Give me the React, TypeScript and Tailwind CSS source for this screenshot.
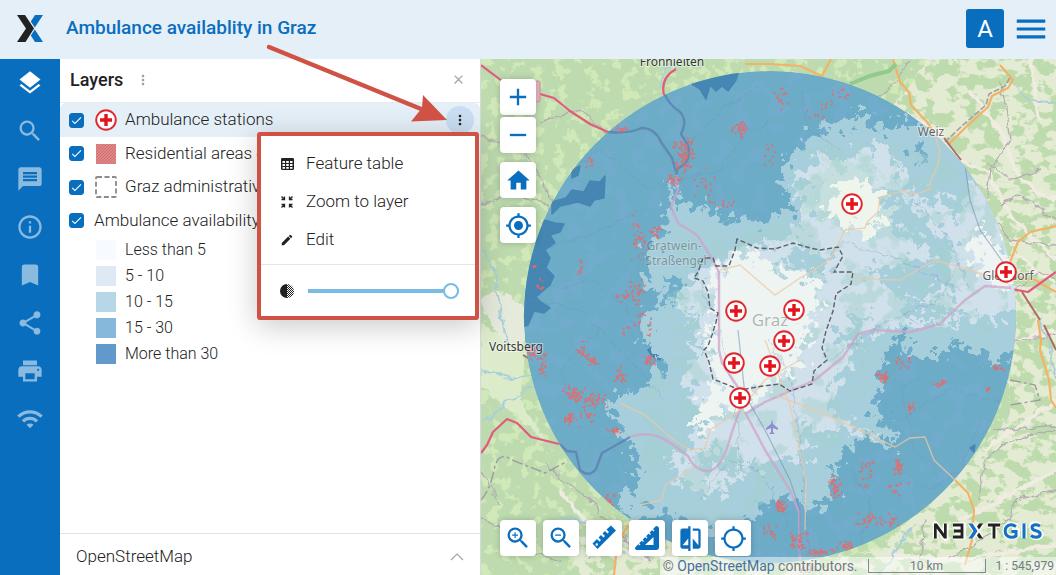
import React from "react";
import {
  MdLayers, MdSearch, MdMessage, MdInfoOutline, MdBookmark, MdShare, MdPrint, MdWifi, MdHome,
  MdMyLocation, MdCompare, MdZoomIn, MdZoomOut, MdEdit, MdMoreVert, MdAdd, MdRemove, MdMenu,
  MdLocationSearching, MdClose, MdCheck,
} from "react-icons/md";

type Point = [number, number];

function StationGlyph() {
  return (
    <g>
      <circle r="9.8" fill="#fff" stroke="#e3262e" strokeWidth="1.9" />
      <path d="M-6 0H6M0-6V6" stroke="#e3141c" strokeWidth="3.4" />
    </g>
  );
}

const stations: Point[] = [
  [852, 204], [1006, 272], [736, 311], [794, 310], [784, 341], [734, 363], [770, 366], [740, 398],
];

/* x, y, horizontal spread, vertical spread, count */
const settlements: [number, number, number, number, number][] = [
  [684, 155, 12, 17, 75], [740, 130, 10, 10, 34], [674, 180, 10, 6, 18], [622, 130, 7, 3, 12],
  [592, 162, 5, 6, 8], [640, 240, 10, 26, 30], [655, 230, 6, 12, 14], [580, 270, 4, 10, 10],
  [637, 290, 12, 14, 16], [628, 297, 20, 8, 22], [534, 268, 3, 4, 6], [541, 286, 4, 12, 10],
  [532, 352, 7, 8, 24], [543, 366, 5, 14, 20], [582, 350, 8, 10, 18], [593, 360, 8, 6, 14],
  [575, 395, 12, 10, 45], [595, 400, 12, 8, 26], [570, 420, 8, 8, 28], [615, 431, 7, 6, 16],
  [587, 417, 10, 12, 18], [650, 360, 8, 8, 20], [620, 375, 10, 9, 18], [640, 325, 20, 20, 18],
  [607, 502, 10, 9, 22], [723, 205, 15, 8, 10], [703, 185, 14, 24, 14], [780, 98, 9, 14, 16],
  [818, 110, 16, 12, 12], [840, 92, 18, 10, 10], [770, 155, 12, 20, 10], [882, 378, 6, 9, 26],
  [905, 365, 10, 8, 12], [940, 384, 8, 5, 14], [998, 367, 7, 5, 12], [988, 389, 3, 3, 8],
  [912, 408, 5, 9, 14], [898, 466, 4, 10, 25], [900, 490, 12, 12, 12], [835, 490, 7, 18, 34],
  [865, 472, 12, 18, 20], [780, 507, 8, 8, 30], [770, 530, 14, 10, 14], [798, 540, 12, 12, 34],
  [820, 552, 15, 5, 26], [845, 546, 10, 5, 20], [870, 520, 14, 12, 26], [890, 520, 10, 8, 12],
];

function scatter() {
  let seed = 41;
  const next = () => {
    seed = (seed * 16807) % 2147483647;
    return seed / 2147483647;
  };
  let d = "";
  for (const [x, y, rx, ry, n] of settlements) {
    for (let i = 0; i < n; i++) {
      const px = x + (next() + next() - 1) * rx;
      const py = y + (next() + next() - 1) * ry;
      const dx = (next() - 0.5) * 4;
      const dy = (next() - 0.5) * 4;
      d += `M${px.toFixed(1)} ${py.toFixed(1)}l${dx.toFixed(1)} ${dy.toFixed(1)}`;
    }
  }
  return d;
}

const settlementPath = scatter();

function MapCanvas() {
  return (
    <svg
      className="absolute inset-0 h-full w-full"
      viewBox="481 59 575 516"
      preserveAspectRatio="xMinYMin slice"
      role="img"
      aria-label="Map of ambulance availability"
    >
      <defs>
        <clipPath id="area"><circle cx="770" cy="317" r="246" /></clipPath>
        <filter id="jag" x="-10%" y="-10%" width="120%" height="120%" colorInterpolationFilters="sRGB">
          <feTurbulence type="fractalNoise" baseFrequency="0.1" numOctaves="4" seed="8" />
          <feDisplacementMap in="SourceGraphic" scale="44" xChannelSelector="R" yChannelSelector="G" />
        </filter>
        <filter id="rough" x="-10%" y="-10%" width="120%" height="120%" colorInterpolationFilters="sRGB">
          <feTurbulence type="fractalNoise" baseFrequency="0.09" numOctaves="3" seed="3" />
          <feDisplacementMap in="SourceGraphic" scale="9" xChannelSelector="R" yChannelSelector="G" />
        </filter>
        <filter id="meadow" x="0" y="0" width="100%" height="100%" colorInterpolationFilters="sRGB">
          <feTurbulence type="fractalNoise" baseFrequency="0.09" numOctaves="4" seed="12" />
          <feColorMatrix values="0 0 0 0 0.82  0 0 0 0 0.915  0 0 0 0 0.72  12 0 0 0 -6.6" />
          <feComposite in2="SourceGraphic" operator="in" />
        </filter>
        <filter id="woods" x="0" y="0" width="100%" height="100%" colorInterpolationFilters="sRGB">
          <feTurbulence type="fractalNoise" baseFrequency="0.06 0.08" numOctaves="4" seed="5" />
          <feColorMatrix values="0 0 0 0 0.74  0 0 0 0 0.86  0 0 0 0 0.68  0 14 0 0 -6.8" />
          <feComposite in2="SourceGraphic" operator="in" />
        </filter>
        <filter id="relief" x="0" y="0" width="100%" height="100%" colorInterpolationFilters="sRGB">
          <feTurbulence type="fractalNoise" baseFrequency="0.06" numOctaves="4" seed="21" />
          <feColorMatrix values="0 0 0 0 0.48  0 0 0 0 0.68  0 0 0 0 0.86  9 0 0 0 -4.7" />
          <feComposite in2="SourceGraphic" operator="in" />
        </filter>
        <filter id="foliage" x="0" y="0" width="100%" height="100%" colorInterpolationFilters="sRGB">
          <feTurbulence type="fractalNoise" baseFrequency="0.045" numOctaves="5" seed="33" />
          <feColorMatrix values="0 0 0 0 0.64  0 0 0 0 0.82  0 0 0 0 0.8  12 0 0 0 -6.1" />
          <feComposite in2="SourceGraphic" operator="in" />
        </filter>
      </defs>

      <rect x="481" y="59" width="575" height="516" fill="#bddbaf" />
      <rect x="481" y="59" width="575" height="516" filter="url(#meadow)" />
      <g filter="url(#rough)">
        <path d="M880 120L930 59H1066V590H590L560 535L640 525L760 570L880 550L1010 420L1010 240Z" fill="#e4ebd3" />
        <path d="M481 325L500 335L525 355L520 400L545 440L520 420L481 385Z" fill="#dceccb" />
        <path d="M481 300L500 290L525 310L524 350L500 340Z" fill="#e6eadb" />
      </g>
      <path d="M880 120L930 59H1056V575H590L570 525L640 525L760 570L880 550L1010 420L1010 240Z" filter="url(#woods)" />
      <g fill="none" stroke="#f0ece2" strokeWidth="4" filter="url(#rough)">
        <path d="M905 115L935 130L960 160L990 175L1010 215L1056 260M970 90L1000 130L1020 180L1056 200M1010 250L1056 285M1015 340L1056 330M985 450L1056 400M960 520L1056 470M890 555L960 560L1056 545M560 490L600 540L650 560M1030 59L1040 120" />
      </g>

      <g fill="none" stroke="#b3adb1" strokeWidth="1.4" filter="url(#rough)">
        <path d="M481 137L503 143L525 128M540 122L580 110L610 135M525 152L540 180L552 200L548 250L520 230M481 203L510 195L548 203L550 215M910 59L895 85L870 100M1000 80L1010 140L990 170L985 210L1010 240L1056 245M985 160L1010 180L1040 170M1000 205L1020 195L1056 220M1015 290L1040 270L1056 280M1010 340L1056 335M990 430L1025 428L1056 425M980 500L985 460L1010 440L1056 430M950 560L1010 520L1015 500L1056 490M481 520L500 525L525 550L560 560M545 462L560 478L590 500L605 520L650 560M481 470L500 505M590 560L600 530L640 545M920 560L925 520" />
      </g>
      <path d="M481 500Q490 490 494 470T512 460L545 473L566 462M1010 380L1035 385L1040 400L1010 405" fill="none" stroke="#9f98a0" strokeWidth="1.4" strokeDasharray="11 3 3 3" />
      <g fill="none" stroke="#aacfdb" strokeWidth="2" filter="url(#rough)">
        <path d="M481 250L495 270L500 310L508 345M481 370L510 378L530 375M481 425L510 400L535 385M560 515L595 525M660 90L664 70L680 59M910 530L890 560L880 575M1018 90L1030 100L1056 103M1040 320L1050 350L1056 380" />
      </g>

      <g fill="none" stroke="#f3b365" strokeWidth="2.2" strokeLinejoin="round">
        <path d="M745 64H770L800 66L822 76L831 59M893 59L900 82L909 92L911 105L927 122L934 133M1000 65L1013 80L1008 88L992 96L988 107L965 128L948 145M1010 262L1018 242L1030 232L1056 226M1012 276L1035 280L1056 292M1038 320L1041 340L1040 350L1049 380L1051 400L1056 408M955 480L968 493L974 510L972 540L965 565M628 525L617 545L614 575" />
      </g>
      <path d="M948 145L966 128L989 108L992 97L1008 89L1014 79" fill="none" stroke="#a59ea0" strokeWidth="1.6" strokeDasharray="6 2" transform="translate(-3 -3)" />
      <g fill="none" stroke="#e35b7c" strokeWidth="2.2" strokeLinejoin="round">
        <path d="M481 65L502 81M540 94L554 98L570 111L590 124L610 133M664 95Q660 78 676 69M481 453L487 445L493 432L507 419L517 423L531 437L559 444M1011 289L1028 292L1056 272" />
      </g>
      <rect x="534" y="81" width="6" height="21" rx="2" fill="#e6b4c0" stroke="#cf8fa1" />
      <path d="M523 355L535 362M944 138L961 160M1022 292L1040 320M1044 325L1056 350" fill="none" stroke="#ae6d62" strokeWidth="2" />
      <path d="M850 84L870 76L889 71L896 64" fill="none" stroke="#92c98c" strokeWidth="4" />

      <g clipPath="url(#area)">
        <circle cx="770" cy="317" r="246" fill="#6dacc6" />
        <circle cx="770" cy="317" r="246" filter="url(#relief)" opacity="0.3" />
        <g fill="#4586b2" stroke="#4586b2" strokeWidth="1.5" strokeLinejoin="round">
          <path d="M695 60H742L736 80L728 91L722 86L716 91L710 85L706 99L700 89L692 84Z" />
          <path d="M552 202L566 198L572 190L584 192L590 181L600 182L605 176L604 198L594 200L590 206L578 202L560 206L552 214Z" />
          <path d="M572 170L580 166L578 175L572 178Z" />
          <path d="M515 215L548 221L555 223L564 224L560 232L550 235L555 243L545 250L550 258L546 268L554 276L550 285L544 290L536 297L542 303L550 308L544 313L534 311L528 325L515 330Z" />
          <path d="M655 345L664 350L660 360L652 356L648 350ZM970 448L975 445L974 452Z" />
        </g>
        <g filter="url(#jag)">
          <path
            fill="#a7cedb"
            d="M862 106L868 124L893 128L930 120L1040 120L1040 358L990 360L975 353L953 342L942 357L915 357L900 332L888 350L880 372L878 395L872 417L886 422L897 447L884 443L870 438L855 442L843 455L832 478L828 502L812 512L798 502L775 498L758 508L740 528L710 532L690 522L670 515L655 510L636 520L622 510L618 498L628 488L641 480L636 462L628 440L618 424L606 404L622 392L648 385L664 368L658 352L642 338L644 318L658 306L650 286L646 262L652 242L665 236L668 206L666 184L674 188L686 212L706 206L726 222L748 220L758 230L772 218L790 210L790 195L783 177L790 160L803 138L828 128L846 124Z"
          />
          <path
            fill="#d0e1eb"
            d="M801 168L822 156L836 164L860 151L883 145L902 168L904 183L924 204L942 198L960 214L974 178L1040 210L1030 312L982 318L940 325L895 325L865 335L848 360L832 388L830 412L855 424L875 434L838 432L815 430L808 458L780 460L742 474L716 494L684 484L668 466L690 446L704 424L692 404L688 372L695 340L680 310L682 286L704 270L734 248L785 240L804 222L802 194Z"
          />
          <path fill="#a7cedb" d="M876 185L896 193L918 208L932 230L955 248L950 262L922 248L900 230ZM866 270L905 262L960 258L945 290L908 302L890 288ZM800 245L836 255L820 278L778 262ZM715 355L690 345L700 320L690 306L684 330ZM830 340L870 310L855 345ZM900 300L950 305L970 318L910 318Z" />
          <path fill="#a9d0d9" d="M700 450L735 450L750 470L700 475ZM802 425L818 430L812 455L800 450Z" />
          <path fill="#71aeca" d="M664 278L682 276L683 290L668 302ZM912 145L922 143L926 156L918 156Z" />
          <path fill="#c5dfdf" d="M820 168L850 160L880 170L866 184L895 210L875 232L830 228L804 208Z" />
        </g>
        <path
          filter="url(#foliage)"
          opacity="0.45"
          d="M862 140L930 150L1000 200L1010 330L960 335L900 325L870 370L860 420L870 435L820 450L800 490L720 520L640 505L640 400L670 350L665 250L700 240L790 220L800 150Z"
        />
        <g filter="url(#jag)">
          <path fill="#edf5ed" d="M834 188L852 182L872 184L880 204L884 220L868 236L842 222L826 210Z" />
          <path fill="#edf4f2" d="M714 268L748 250L774 270L820 278L816 312L802 348L792 372L762 388L750 410L716 412L702 434L695 412L718 386L708 350L712 310Z" />
          <path fill="#edf4f2" d="M980 228L998 244L1018 270L1012 290L990 284L978 264L966 250Z" />
        </g>

        <g fill="none" stroke="#6f8ebd" strokeWidth="0.8" opacity="0.4" filter="url(#rough)">
          <path d="M545 185L600 150L625 170L650 190L680 180L720 170L740 140L770 120M540 250L590 235L640 210M530 300L580 310L610 340L640 370L665 400M560 290L590 280L620 300L650 350M600 330L560 370L570 400M880 400L900 420L950 390L1000 400M900 470L930 490L960 470L980 420M850 470L870 500L860 550M680 160L720 110L760 85M800 90L810 130L840 150M770 340L790 380L800 440L805 500L810 550M700 280L720 330L735 400L740 470M840 240L900 260L960 290M910 195L950 240L970 290M830 360L890 320L940 300L960 260M700 500L730 460L760 470L790 530M940 480L915 450L900 390L930 370" />
        </g>
        <g fill="none" stroke="#5b7faf" strokeWidth="2.4" strokeLinejoin="round" opacity="0.75">
          <path d="M608 132Q630 134 641 128Q655 128 661 142L672 158L676 172M664 92Q667 103 680 112Q688 120 681 134L688 145Q692 163 678 168L676 175" />
          <path d="M559 444L567 451L576 452L580 470Q589 478 596 469L602 453L618 444L630 437" />
        </g>
        <g fill="none" stroke="#cfa3c8" strokeWidth="2.4" strokeLinejoin="round" opacity="0.75">
          <path d="M676 175L678 190L671 207L678 223L697 235L708 252L719 272V350L722 363L745 398Q736 418 728 445Q720 470 708 471Q695 471 688 456Q668 440 657 436Q643 432 630 437M745 414L765 402L815 380L843 357L858 334L873 330L910 332L940 324L965 300L985 286L1011 288M745 412L765 450L790 490L799 512L800 570" />
        </g>
        <g fill="none" stroke="#edc8a5" strokeWidth="1.4" opacity="0.75">
          <path d="M934 133L940 150L938 165L931 180L929 190L916 194L903 191L880 197L878 212L867 222L865 228L845 230L840 240L830 260L800 278L775 295L740 265L720 270M854 279L900 280L935 260L990 276L1010 280M620 403L645 415L670 437L690 450L705 448L710 430L740 410L765 380L800 360M775 395L820 412L860 430L895 447L910 438L925 437L934 460L955 480M640 505L662 500L665 485L690 470M765 340L790 405L806 480L805 530" />
        </g>
        <path d="M800 555V510L790 480L765 430L745 395L738 330M944 138L965 165L970 200L980 230L1005 265" stroke="#718bb5" strokeWidth="1.2" fill="none" opacity="0.55" />
      </g>

      <path clipPath="url(#area)" d={settlementPath} stroke="#f06461" strokeWidth="1.3" strokeLinecap="square" fill="none" opacity="0.85" />

      <path
        d="M737 239L735 250L729 266L716 266L713 258L703 258L698 272L694 278L703 281L708 292L710 308L718 313L716 322L712 335L708 346L704 350L709 362L713 379L728 385L740 390L763 386L779 384L790 391L812 384L814 371L827 360L822 348L826 331L833 311L836 294L851 284L853 272L834 272L843 256L838 247L820 250L810 248L793 243L775 249L757 248Z"
        fill="none"
        stroke="#5d6066"
        strokeWidth="1.4"
        strokeDasharray="5 2.5"
      />

      <g fontFamily="Noto Sans, sans-serif" fontSize="12" textAnchor="middle" fill="#343737" stroke="#fff" strokeOpacity="0.5" strokeWidth="2" paintOrder="stroke">
        <text x="672" y="66">Frohnleiten</text>
        <text x="931" y="136" fontSize="12" fillOpacity="0.75">Weiz</text>
        <text x="674" y="250" fillOpacity="0.42" strokeOpacity="0.15">Gratwein-</text>
        <text x="676" y="265" fillOpacity="0.42" strokeOpacity="0.15">Straßengel</text>
        <text x="516" y="351">Voitsberg</text>
        <text x="1008" y="280" fillOpacity="0.8">Gleisdorf</text>
        <text x="770" y="326" fontSize="17" fillOpacity="0.35" strokeOpacity="0.2">Graz</text>
        <text x="806" y="573" fontSize="10" fill="#a73258" fillOpacity="0.7">A9</text>
      </g>
      <path d="M772 419L773 424L778 428V430L773 428V432L775 434H769L771 432V428L766 430V428L771 424Z" fill="#8f8fcf" />

      {stations.map(([x, y]) => (
        <g key={`${x}-${y}`} transform={`translate(${x} ${y})`}><StationGlyph /></g>
      ))}
    </svg>
  );
}

function LogoMark() {
  return (
    <svg className="h-7 w-7" viewBox="0 0 28 28" aria-hidden="true">
      <path d="M1 0H9L18 13.500L9.500 27H1L10 13.500Z" fill="#222" />
      <path d="M19 0H27L18.800 12.500L14.800 6.500Z M18.800 14.500L27 27H19L14.800 20.500Z" fill="#0a6ebf" />
    </svg>
  );
}

function NextGisLogo() {
  return (
    <svg className="h-6 w-[116px]" viewBox="0 0 116 24" role="img" aria-label="NextGIS">
      <g fill="none" strokeLinejoin="miter">
        <g stroke="#fff" strokeWidth="6" opacity="0.85" strokeLinejoin="round">
          <path d="M4.500 19V5L14.500 19V5M22 6H32V18H22M24 12H32M40 5L50 19M50 5L40 19M57 6H69M63 6V19M86 8Q79 3 75.500 8Q73 12 75.500 16Q80 20 86 16V12H81M93 5V19M109 7Q101 3 101 8Q101 11 106 12Q112 14 109 17Q105 20 100 16" />
        </g>
        <g fill="#222">
          <path d="M3 19.500V4.500H5.800L13 14.500V4.500H15.700V19.500H13L5.700 9.500V19.500Z" />
        </g>
        <g stroke="#222" strokeWidth="2.800">
          <path d="M22 6H31V18H22M23 12H31M57 6H69M63 6V19.500" />
        </g>
        <g stroke="#1670c4" strokeWidth="3">
          <path d="M85 7.500Q82 5.500 80 5.700Q74.200 6.500 74.200 12T80 18.300Q83 18.500 85 17V12.500H80.500M93 4.500V19.500M109 7Q106 5.600 104.500 5.800Q101 6.200 101 8.500Q101 10.800 105 11.800Q109.500 12.800 109.200 15.500Q108.800 18.200 105 18.200Q102 18.200 100 16.500" />
        </g>
      </g>
      <path d="M48 4.500H52L44 16.500L41 19.500H37.500Z" fill="#1670c4" opacity="0" />
      <path d="M37.500 4.500H41.500L46.500 12L41.500 19.500H37.500L42.500 12Z" fill="#1670c4" />
      <path d="M48 4.500H52L48 10.500L46 7.500ZM48 13.500L52 19.500H48L46 16.500Z" fill="#222" />
    </svg>
  );
}

function RulerIcon() {
  return (
    <svg width="26" height="26" viewBox="0 0 26 26" aria-hidden="true">
      <path d="M1.500 18.500L6 14L8.500 16.500L10 15L7.500 12.500L10 10L12.500 12.500L14 11L11.500 8.500L14 6L16.500 8.500L18 7L15.500 4.500L20 0.500L25 5.500L6.500 24Z" fill="#0a6ebf" />
      <circle cx="5.800" cy="19.500" r="1.200" fill="#fff" />
    </svg>
  );
}

function TriangleRulerIcon() {
  return (
    <svg width="26" height="26" viewBox="0 0 26 26" aria-hidden="true">
      <path fillRule="evenodd" d="M22 1Q25 1 25 4V22Q25 25 22 25H3Q0 24.500 1.500 22ZM19.500 12L11 20H19.500Z" fill="#0a6ebf" />
      <path d="M4 18L6 20M7.500 14.500L9.500 16.500M11 11L13 13M14.500 7.500L16.500 9.500M18 4L20 6" stroke="#fff" strokeWidth="1.300" />
    </svg>
  );
}

function TableIcon() {
  return (
    <svg width="13" height="12" viewBox="0 0 13 12" aria-hidden="true">
      <rect width="13" height="12" rx="1.300" fill="#222" />
      <path d="M1.500 3H4V5H1.500ZM5.200 3H7.800V5H5.200ZM9 3H11.500V5H9ZM1.500 6H4V8H1.500ZM5.200 6H7.800V8H5.200ZM9 6H11.500V8H9ZM1.500 9H4V10.800H1.500ZM5.200 9H7.800V10.800H5.200ZM9 9H11.500V10.800H9Z" fill="#fff" />
    </svg>
  );
}

function ZoomToIcon() {
  return (
    <svg width="12" height="12" viewBox="0 0 12 12" fill="none" stroke="#222" strokeWidth="1.300" aria-hidden="true">
      <path d="M0.500 0.500L3 3M3.500 0.500V3.500H0.500M11.500 0.500L9 3M8.500 0.500V3.500H11.500M0.500 11.500L3 9M0.500 8.500H3.500V11.500M11.500 11.500L9 9M11.500 8.500H8.500V11.500" />
    </svg>
  );
}

function OpacityIcon() {
  return (
    <svg width="14" height="14" viewBox="0 0 14 14" aria-hidden="true">
      <defs>
        <pattern id="dots" width="2" height="2" patternUnits="userSpaceOnUse">
          <path d="M0 0H1V1H0ZM1 1H2V2H1Z" fill="#222" />
        </pattern>
      </defs>
      <path d="M7 0A7 7 0 0 0 7 14Z" fill="#222" />
      <path d="M7 0A7 7 0 0 1 7 14Z" fill="url(#dots)" />
    </svg>
  );
}

function ChevronUpIcon() {
  return (
    <svg width="14" height="14" viewBox="0 0 14 14" fill="none" stroke="#a3a6aa" strokeWidth="1.200" aria-hidden="true">
      <path d="M1 10L7 4L13 10" />
    </svg>
  );
}

function LayerCheckbox({ id }: { id: string }) {
  return (
    <span className="relative flex h-[15px] w-[15px] shrink-0">
      <input
        id={id}
        type="checkbox"
        defaultChecked
        className="peer h-[15px] w-[15px] appearance-none rounded-[3px] border border-[#0a6ebf] checked:bg-[#0a6ebf]"
      />
      <MdCheck className="pointer-events-none absolute inset-0 m-auto hidden text-white peer-checked:block" size={13} />
    </span>
  );
}

const navItems = [
  { label: "Layers", icon: MdLayers },
  { label: "Search", icon: MdSearch },
  { label: "Annotations", icon: MdMessage },
  { label: "Information", icon: MdInfoOutline },
  { label: "Bookmarks", icon: MdBookmark },
  { label: "Share", icon: MdShare },
  { label: "Print", icon: MdPrint },
  { label: "Tracking", icon: MdWifi },
];

const legend = [
  { text: "Less than 5", swatch: "bg-[#f7fbff]" },
  { text: "5 - 10", swatch: "bg-[#dfe9f6]" },
  { text: "10 - 15", swatch: "bg-[#b7d6e8]" },
  { text: "15 - 30", swatch: "bg-[#85b8da]" },
  { text: "More than 30", swatch: "bg-[#6199ca]" },
];

const menuItems = [
  { text: "Feature table", icon: <TableIcon /> },
  { text: "Zoom to layer", icon: <ZoomToIcon /> },
  { text: "Edit", icon: <MdEdit size={14} /> },
];

function LayerMenu() {
  return (
    <div className="absolute top-[73px] right-px z-10 w-[222px] rounded-[3px] border-4 border-[#d05244] bg-white shadow-[0_6px_30px_rgba(0,0,0,0.22)]">
      <ul className="pt-[9px] pb-[5px]">
        {menuItems.map((item) => (
          <li key={item.text}>
            <button type="button" className="flex h-[38px] w-full items-center gap-3 pl-[19px] text-left">
              <span className="flex w-[14px] justify-center">{item.icon}</span>
              {item.text}
            </button>
          </li>
        ))}
      </ul>
      <div className="flex h-[52px] items-center gap-3.5 border-t border-[#e5e5e5] pr-4 pl-[19px]">
        <OpacityIcon />
        <input
          type="range"
          aria-label="Layer opacity"
          defaultValue={100}
          className="h-4 min-w-0 flex-1 appearance-none bg-transparent [&::-webkit-slider-runnable-track]:h-1 [&::-webkit-slider-runnable-track]:bg-[#78bce6] [&::-webkit-slider-thumb]:-mt-1.5 [&::-webkit-slider-thumb]:h-4 [&::-webkit-slider-thumb]:w-4 [&::-webkit-slider-thumb]:appearance-none [&::-webkit-slider-thumb]:rounded-full [&::-webkit-slider-thumb]:border-2 [&::-webkit-slider-thumb]:border-[#78bce6] [&::-webkit-slider-thumb]:bg-white"
        />
      </div>
    </div>
  );
}

function LayersPanel() {
  return (
    <section className="relative flex w-[421px] shrink-0 flex-col border-r border-[#d5d9df] bg-white text-[17px] font-light">
      <div className="flex h-[44px] shrink-0 items-center border-b border-[#e8eaec] pr-3.5 pb-0.5 pl-2.5">
        <h2 className="text-[18px] font-medium">Layers</h2>
        <button type="button" aria-label="Panel options" className="ml-3 text-[#9c9fa3]"><MdMoreVert size={16} /></button>
        <button type="button" aria-label="Close panel" className="ml-auto text-[#a3a6aa]"><MdClose size={15} /></button>
      </div>
      <ul>
        <li className="flex h-[34px] items-center rounded-t-md bg-[#e5eff8] pr-1.5 pl-[9px]">
          <LayerCheckbox id="stations" />
          <label htmlFor="stations" className="ml-2.5 flex items-center gap-[7px]">
            <svg width="24" height="24" viewBox="-12 -12 24 24" aria-hidden="true"><StationGlyph /></svg>
            Ambulance stations
          </label>
          <button type="button" aria-label="Layer actions" className="ml-auto flex h-7 w-7 items-center justify-center rounded-full bg-[#c9def2]">
            <MdMoreVert size={16} />
          </button>
        </li>
        <li className="flex h-[33px] items-center pl-[9px]">
          <LayerCheckbox id="residential" />
          <label htmlFor="residential" className="ml-2.5 flex items-center gap-[7px] whitespace-nowrap">
            <svg width="24" height="24" viewBox="0 0 24 24" aria-hidden="true">
              <pattern id="hatch" width="3" height="3" patternUnits="userSpaceOnUse">
                <path d="M0 3L3 0" stroke="#c96d70" strokeWidth="0.900" />
              </pattern>
              <rect x="2" y="2" width="20" height="20" fill="#e18586" />
              <rect x="2" y="2" width="20" height="20" fill="url(#hatch)" />
            </svg>
            Residential areas of Graz
          </label>
        </li>
        <li className="flex h-[34px] items-center pl-[9px]">
          <LayerCheckbox id="boundary" />
          <label htmlFor="boundary" className="ml-2.5 flex items-center gap-[7px] whitespace-nowrap">
            <svg width="24" height="24" viewBox="0 0 24 24" aria-hidden="true">
              <rect x="2" y="2" width="20" height="20" rx="1" fill="none" stroke="#8b8b8b" strokeWidth="1.800" strokeDasharray="5 2.500" />
            </svg>
            Graz administrative boundary
          </label>
        </li>
        <li className="flex h-[33px] items-center pl-[9px]">
          <LayerCheckbox id="availability" />
          <label htmlFor="availability" className="ml-2.5 whitespace-nowrap">Ambulance availability, min</label>
        </li>
      </ul>
      <ul className="pl-9 text-[16px]">
        {legend.map((item) => (
          <li key={item.text} className="flex h-[26px] items-center gap-[9px]">
            <span className={`h-5 w-5 ${item.swatch}`} />
            {item.text}
          </li>
        ))}
      </ul>
      <div className="mt-auto flex h-[42px] shrink-0 items-center justify-between border-t border-[#e1e3e6] px-4 pt-1">
        <span>OpenStreetMap</span>
        <button type="button" aria-label="Expand basemap"><ChevronUpIcon /></button>
      </div>
      <LayerMenu />
    </section>
  );
}

function MapButton({ label, children }: { label: string; children: React.ReactNode }) {
  return (
    <button type="button" aria-label={label} className="flex h-9 w-9 items-center justify-center rounded-[4px] bg-white text-[#0a6ebf] shadow-[0_0_6px_rgba(0,0,0,0.22)]">
      {children}
    </button>
  );
}

function MapView() {
  return (
    <main className="relative min-w-0 flex-1 overflow-hidden">
      <MapCanvas />
      <div className="absolute top-5 left-[19px] flex flex-col gap-[9px]">
        <div className="flex flex-col gap-0.5">
          <MapButton label="Zoom in"><MdAdd size={28} /></MapButton>
          <MapButton label="Zoom out"><MdRemove size={28} /></MapButton>
        </div>
        <MapButton label="Home"><MdHome size={27} /></MapButton>
        <MapButton label="My location"><MdMyLocation size={27} /></MapButton>
      </div>
      <div className="absolute bottom-[19px] left-[19px] flex gap-[7px]">
        <MapButton label="Zoom to area"><MdZoomIn size={28} /></MapButton>
        <MapButton label="Zoom out area"><MdZoomOut size={28} /></MapButton>
        <MapButton label="Measure distance"><RulerIcon /></MapButton>
        <MapButton label="Measure area"><TriangleRulerIcon /></MapButton>
        <MapButton label="Compare"><MdCompare size={27} /></MapButton>
        <MapButton label="Identify"><MdLocationSearching size={27} /></MapButton>
      </div>
      <div className="absolute right-[9px] bottom-8"><NextGisLogo /></div>
      <div className="absolute right-0 bottom-0 flex h-[18px] items-center bg-white/50 pr-0.5 pl-[3px] text-[14px] whitespace-nowrap text-[#737b83]">
        <span>© <a href="#osm" className="text-[#4a70a3]">OpenStreetMap</a> contributors.</span>
        <span className="mr-2.5 ml-2.5 flex h-3.5 w-[118px] items-center justify-center border border-t-0 border-[#858b91] text-[12px]">10 km</span>
        <span className="text-[12px]">1 : 545,979</span>
      </div>
    </main>
  );
}

export default function App() {
  return (
    <div className="relative flex h-screen flex-col overflow-hidden font-['Roboto',sans-serif] text-[#222]">
      <header className="flex h-[59px] shrink-0 items-center bg-[#e5eff8] pr-1.5 pb-0.5 pl-4">
        <LogoMark />
        <h1 className="ml-[22px] text-[19px] font-medium text-[#0a6ebf]">Ambulance availablity in Graz</h1>
        <button type="button" aria-label="Account" className="ml-auto flex h-[39px] w-[38px] items-center justify-center rounded-[3px] bg-[#0a6ebf] text-[24px] text-white">A</button>
        <button type="button" aria-label="Menu" className="ml-2 text-[#0a6ebf]"><MdMenu size={38} /></button>
      </header>
      <div className="flex min-h-0 flex-1">
        <nav className="flex w-[60px] shrink-0 flex-col items-center bg-[#0a6ebf]">
          {navItems.map(({ label, icon: Icon }, i) => (
            <button key={label} type="button" aria-label={label} className={`flex h-12 w-full items-center justify-center ${i === 0 ? "text-white" : "text-[#8bbadf]"}`}>
              <Icon size={28} />
            </button>
          ))}
        </nav>
        <LayersPanel />
        <MapView />
      </div>
      <svg className="pointer-events-none absolute top-10 left-[260px] z-20 h-[90px] w-[200px]" viewBox="260 40 200 90" aria-hidden="true">
        <path d="M269 47L426 111" stroke="#d05244" strokeWidth="4.500" strokeLinecap="round" />
        <path d="M447 120L423 95L422 108L411 121.500Z" fill="#d05244" />
      </svg>
    </div>
  );
}
